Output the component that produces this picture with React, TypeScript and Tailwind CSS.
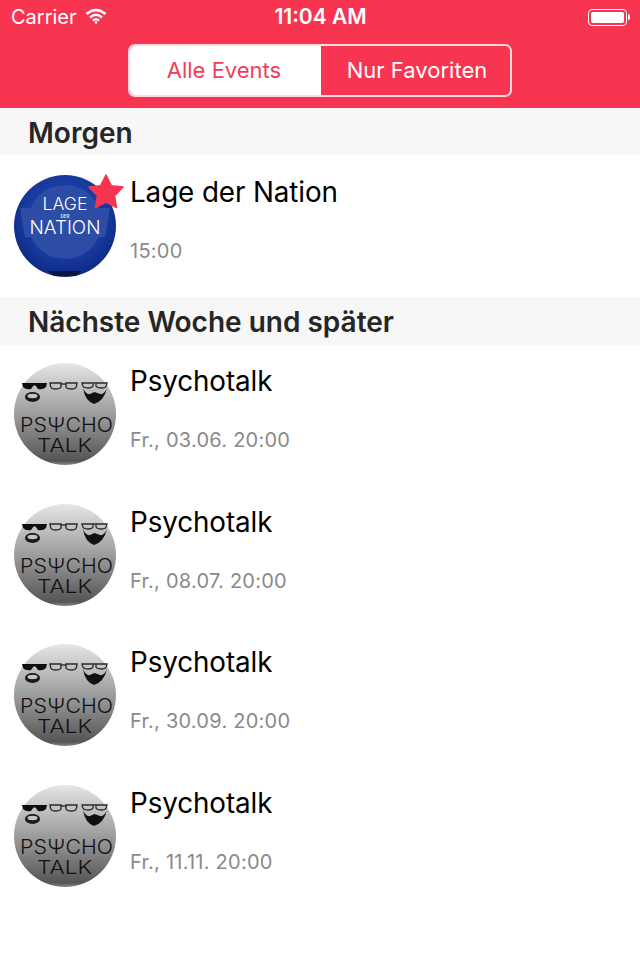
import React from "react";

const font = { fontFamily: "Inter, 'Liberation Sans', sans-serif" };

function LageLogo() {
  return (
    <svg viewBox="0 0 102 102" className="w-[102px] h-[102px] block">
      <defs>
        <radialGradient id="lage" cx="50%" cy="42%" r="60%">
          <stop offset="0%" stopColor="#2347ad" />
          <stop offset="65%" stopColor="#183a9f" />
          <stop offset="100%" stopColor="#0c2780" />
        </radialGradient>
      </defs>
      <circle cx="51" cy="51" r="51" fill="url(#lage)" />
      <circle cx="51" cy="47" r="37" fill="#2c4ca6" />
      <path d="M6 33 H96 L91 62 H11 Z" fill="#2c4ca6" />
      <path d="M34 96 H68 L62 101 H40 Z" fill="#0b1740" />
      <text x="51" y="35" textAnchor="middle" fontSize="17" fontWeight="300" textLength="45" lengthAdjust="spacingAndGlyphs" fill="#ffffff" fontFamily="Inter, sans-serif">LAGE</text>
      <text x="51" y="43" textAnchor="middle" fontSize="4.6" fill="#dfe6f5" fontFamily="Inter, sans-serif" fontWeight="600">DER</text>
      <text x="51" y="59" textAnchor="middle" fontSize="18.5" fontWeight="300" textLength="71" lengthAdjust="spacingAndGlyphs" fill="#ffffff" fontFamily="Inter, sans-serif">NATION</text>
    </svg>
  );
}

function PsychoLogo({ id }: { id: string }) {
  return (
    <svg viewBox="0 0 102 102" className="w-[102px] h-[102px] block">
      <defs>
        <linearGradient id={id} x1="0" y1="0" x2="0" y2="1">
          <stop offset="0%" stopColor="#e6e6e6" />
          <stop offset="25%" stopColor="#c0c0c0" />
          <stop offset="60%" stopColor="#8e8e8e" />
          <stop offset="96%" stopColor="#555555" />
          <stop offset="100%" stopColor="#8a8a8a" />
        </linearGradient>
      </defs>
      <circle cx="51" cy="51" r="51" fill={`url(#${id})`} />
      {/* sunglasses guy */}
      <path d="M8 20 H33 L32 24 Q29 27 24 26 L21.5 22.5 H19.5 L17 26 Q12 27 9 24 Z" fill="#0d0d0d" />
      <ellipse cx="18.5" cy="34" rx="7.5" ry="5" fill="#1a1a1a" />
      <ellipse cx="18.5" cy="33" rx="5" ry="2.2" fill="#c4c4c4" />
      {/* glasses guy */}
      <path d="M36 20 H47 V24 Q46 26 41 26 Q37 26 36.5 23 Z M52 20 H63 L62.5 23 Q62 26 58 26 Q53 26 52 24 Z" fill="none" stroke="#2a2a2a" strokeWidth="1.4" />
      <path d="M47 21 H52" stroke="#2a2a2a" strokeWidth="1.4" />
      {/* beard guy */}
      <path d="M68 20 H79 V23 Q78 25 74 25 Q69 25 68.5 22 Z M82 20 H93 L92.5 22 Q92 25 88 25 Q83 25 82 23 Z" fill="none" stroke="#2a2a2a" strokeWidth="1.3" />
      <path d="M79 20 H82" stroke="#2a2a2a" strokeWidth="1.3" />
      <path d="M69 25 Q71 38 80 41 Q90 38 93 25 Q90 32 86 31 L80.5 29 L76 31 Q72 32 69 25 Z" fill="#111" />
      <text x="52.5" y="69" textAnchor="middle" fontSize="19.5" fontWeight="300" textLength="93" lengthAdjust="spacingAndGlyphs" fill="#111111" fontFamily="Inter, sans-serif">PSΨCHO</text>
      <text x="50.5" y="89" textAnchor="middle" fontSize="18.5" fontWeight="300" textLength="55" lengthAdjust="spacingAndGlyphs" fill="#111111" fontFamily="Inter, sans-serif">TALK</text>
    </svg>
  );
}

function Row({ title, sub, children, first }: { title: string; sub: string; children: React.ReactNode; first?: boolean }) {
  return (
    <div className={first ? "flex h-[142px] pl-[14px] pt-[20px] bg-white" : "flex h-[140.6px] pl-[14px] pt-[18px] bg-white"}>
      <div className="relative w-[102px] h-[102px] shrink-0">{children}</div>
      <div className={first ? "ml-[14px] flex flex-col -mt-[1px]" : "ml-[14px] flex flex-col"}>
        <div className="text-[27.8px] leading-[36px] text-black tracking-[-0.1px]">{title}</div>
        <div className="mt-[29px] text-[20px] leading-[24px] text-[#8a8a8a] tracking-[0.25px]">{sub}</div>
      </div>
    </div>
  );
}

function SectionHeader({ label, className }: { label: string; className: string }) {
  return (
    <div className={`${className} bg-[#f7f7f7] pl-[28px] pt-[9px] text-[28px] leading-[32px] font-semibold text-[#262626]`}>
      {label}
    </div>
  );
}

export default function App() {
  const psycho = ["Fr., 03.06. 20:00", "Fr., 08.07. 20:00", "Fr., 30.09. 20:00", "Fr., 11.11. 20:00"];

  return (
    <div className="w-[640px] h-[960px] bg-white overflow-hidden" style={font}>
      {/* Nav */}
      <div className="h-[108px] bg-[#f73551] text-white">
        <div className="h-[34px] flex items-center justify-between pl-[11px] pr-[10px]">
          <div className="flex items-center w-[200px]">
            <span className="text-[20px] leading-[34px]">Carrier</span>
            <svg viewBox="0 0 22 16" className="w-[22px] h-[16px] ml-[8px] -mt-[3px]" fill="none" stroke="white" strokeWidth="2.4">
              <path d="M1.5 6 Q11 -2 20.5 6" />
              <path d="M5 9.5 Q11 4 17 9.5" />
              <path d="M8 12.6 Q11 9.8 14 12.6" />
              <circle cx="11" cy="14.5" r="1.2" fill="white" stroke="none" />
            </svg>
          </div>
          <span className="text-[21px] leading-[34px] font-semibold">11:04 AM</span>
          <div className="w-[200px] flex justify-end items-center">
            <div className="w-[39px] h-[17px] rounded-[4px] border border-white p-[2px]">
              <div className="w-full h-full bg-white rounded-[2px]" />
            </div>
            <div className="w-[2px] h-[6px] bg-white rounded-r-[2px] ml-[1px]" />
          </div>
        </div>
        <div className="mt-[10px] flex justify-center">
          <div className="flex w-[384px] h-[53px] rounded-[7px] border-2 border-[#fdd7dd] overflow-hidden text-[22px]">
            <div className="w-[191px] bg-white text-[#ee3f59] flex items-center justify-center pr-[3px]">Alle Events</div>
            <div className="flex-1 flex items-center justify-center pl-[3px]">Nur Favoriten</div>
          </div>
        </div>
      </div>

      <SectionHeader label="Morgen" className="h-[47px]" />
      <Row first title="Lage der Nation" sub="15:00">
        <LageLogo />
        <svg viewBox="0 0 36 36" className="absolute w-[36px] h-[36px] -top-[1px] -right-[8px]">
          <path
            d="M18 1 L23.3 11.7 L35 13 L26.6 21.8 L28.5 33.5 L18 28 L7.5 33.5 L9.4 21.8 L1 13 L12.7 11.7 Z"
            fill="#f73551"
            stroke="#f73551"
            strokeWidth="1.5"
            strokeLinejoin="round"
          />
        </svg>
      </Row>

      <SectionHeader label="Nächste Woche und später" className="h-[48px]" />
      {psycho.map((sub, i) => (
        <Row key={sub} title="Psychotalk" sub={sub}>
          <PsychoLogo id={`psy${i}`} />
        </Row>
      ))}
    </div>
  );
}
